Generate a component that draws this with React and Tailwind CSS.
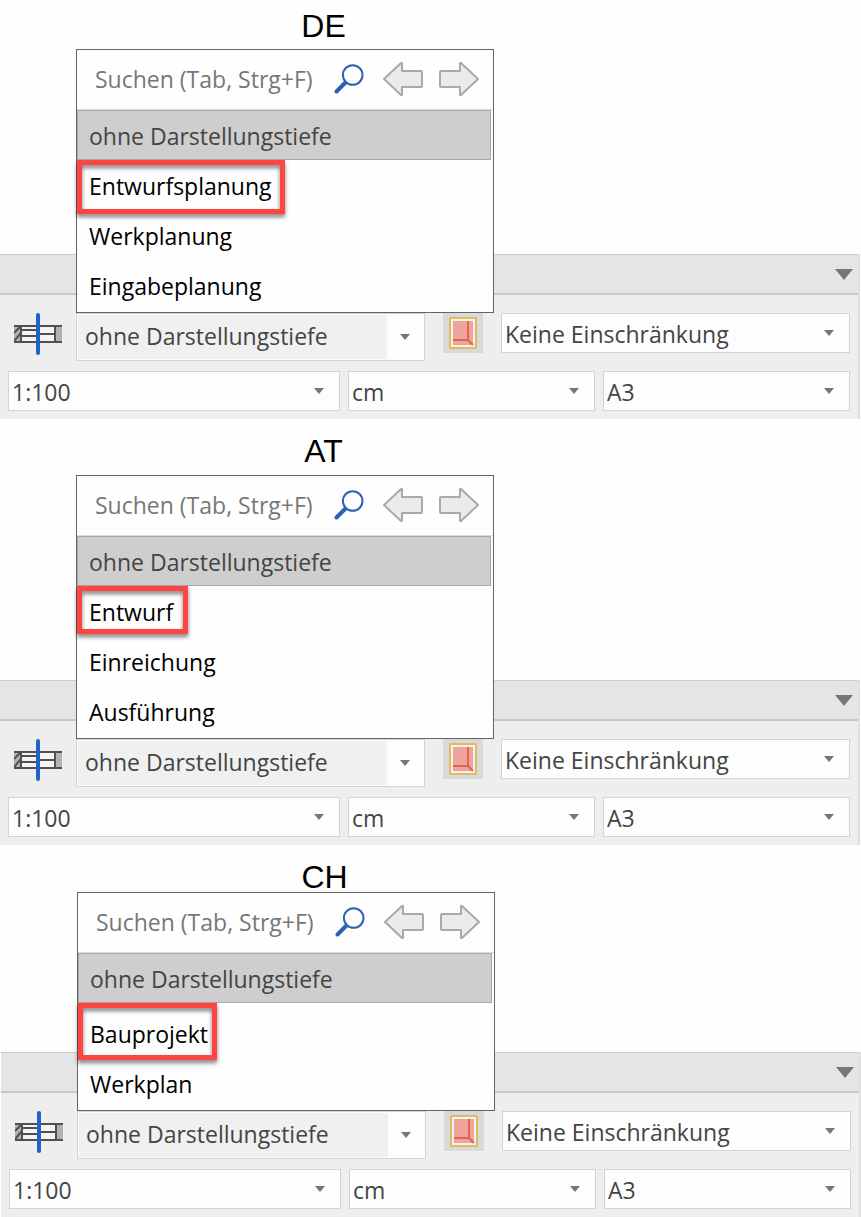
import React from "react";

const panels = [
    {
        id: "de",
        title: "DE",
        headClass: "pt-[10px] pb-[212px]",
        shiftClass: "mr-px",
        options: ["Entwurfsplanung", "Werkplanung", "Eingabeplanung"],
        firstRowClass: "h-[50px]",
        markClass: "w-[208px] h-[54px]",
    },
    {
        id: "at",
        title: "AT",
        headClass: "pt-[16px] pb-[213px]",
        shiftClass: "mr-px",
        options: ["Entwurf", "Einreichung", "Ausführung"],
        firstRowClass: "h-[50px]",
        markClass: "w-[111px] h-[48px]",
    },
    {
        id: "ch",
        title: "CH",
        headClass: "pt-[16px] pb-[159px]",
        shiftClass: "ml-px",
        options: ["Bauprojekt", "Werkplan"],
        firstRowClass: "h-[55px] pt-[5px]",
        markClass: "w-[139px] h-[57px]",
    },
];

function Caret({ className }) {
    return (
        <svg className={className} viewBox="0 0 10 6" aria-hidden="true">
            <path d="M0 0H10L5 6Z" fill="#777777" />
        </svg>
    );
}

function SearchIcon() {
    return (
        <svg className="w-[30px] h-[30px]" viewBox="0 0 30 30" aria-hidden="true">
            <path d="M11.5 18.5L2.5 27.5" stroke="#2b62b4" strokeWidth="4" strokeLinecap="round" />
            <circle cx="18.7" cy="11" r="9.8" fill="#fdfdfd" stroke="#2b62b4" strokeWidth="2" />
        </svg>
    );
}

function PrevIcon() {
    return (
        <svg className="w-[40px] h-[34px]" viewBox="0 0 40 34" aria-hidden="true">
            <path
                d="M1 17L18 1H19V9H38Q39 9 39 10V24Q39 25 38 25H19V33H18Z"
                fill="#ebebeb"
                stroke="#a9a9a9"
                strokeWidth="2"
                strokeLinejoin="round"
            />
        </svg>
    );
}

function NextIcon() {
    return (
        <svg className="w-[40px] h-[34px]" viewBox="0 0 40 34" aria-hidden="true">
            <path
                d="M39 17L22 1H21V9H2Q1 9 1 10V24Q1 25 2 25H21V33H22Z"
                fill="#ebebeb"
                stroke="#a9a9a9"
                strokeWidth="2"
                strokeLinejoin="round"
            />
        </svg>
    );
}

// Wandschnitt mit Fenster und Schnittlinie
function WindowSectionIcon() {
    return (
        <svg className="w-[48px] h-[42px] shrink-0" viewBox="0 0 48 42" aria-hidden="true">
            <rect x="0" y="13" width="7" height="16" fill="#b2b2b2" />
            <rect x="41" y="13" width="7" height="16" fill="#b2b2b2" />
            <rect x="8" y="14" width="32" height="14" fill="#f4f4f4" />
            <g stroke="#505050" strokeWidth="2" fill="none">
                <path d="M0 13H48M0 29H48M7 12V30M41 12V30" />
                <path d="M7 17H24M7 23H24M24 21H41" />
                <path d="M0 20L6 14M0 28L7 20" />
            </g>
            <rect x="22" y="0" width="4" height="42" rx="2" fill="#2062c8" />
        </svg>
    );
}

function FrameIcon() {
    return (
        <svg className="w-[28px] h-[32px]" viewBox="0 0 28 32" aria-hidden="true">
            <rect x="1" y="1" width="26" height="30" rx="0.5" fill="#f4f2f0" stroke="#e0bd58" strokeWidth="2" />
            <rect x="4" y="4" width="20" height="24" fill="#eea39b" />
            <path d="M19 4V23M4 23H19L24 28" fill="none" stroke="#e06555" strokeWidth="2" />
        </svg>
    );
}

function SelectBox({ id, label, value, className }) {
    return (
        <div className={`relative ${className}`}>
            <select
                id={id}
                aria-label={label}
                defaultValue={value}
                className="block w-full h-10 appearance-none rounded-none border border-[#d3d3d3] bg-[#fdfdfd] pl-[3px] pr-10 pt-px leading-9 text-[#444444]"
            >
                <option>{value}</option>
            </select>
            <Caret className="absolute right-4 top-[17px] w-[10px] h-[6px] pointer-events-none" />
        </div>
    );
}

function DepthMenu({ panel }) {
    return (
        <div className="absolute bottom-full left-0 z-10 w-[418px] border border-[#646464] bg-[#fefefe] pb-[2px]">
            <div className="flex items-center h-[60px] border-b border-[#dddddd] pl-[18px] pr-[14px] pb-[2px]">
                <input
                    type="text"
                    aria-label="Suchen"
                    placeholder="Suchen (Tab, Strg+F)"
                    className="flex-1 min-w-0 bg-transparent outline-none placeholder:text-[#777777]"
                />
                <button type="button" aria-label="Suche starten" className="mr-[19px]"><SearchIcon /></button>
                <button type="button" aria-label="Zurück" className="mr-4"><PrevIcon /></button>
                <button type="button" aria-label="Weiter"><NextIcon /></button>
            </div>
            <ul>
                <li className="mr-[2px]">
                    <button
                        type="button"
                        className="block w-full h-[50px] border border-[#a9a9a9] bg-[#cecece] pl-[11px] pt-[2px] text-left text-[#444444]"
                    >
                        ohne Darstellungstiefe
                    </button>
                </li>
                {panel.options.map((option, index) => (
                    <li key={option} className="relative">
                        <button
                            type="button"
                            className={`block w-full pl-3 text-left text-black ${index === 0 ? panel.firstRowClass : "h-[50px]"}`}
                        >
                            <span className="block pt-[2px]">{option}</span>
                        </button>
                        {index === 0 && (
                            <span
                                className={`absolute left-0 top-0 border-[5px] border-[#ff4444] pointer-events-none drop-shadow-[0_3px_2px_rgba(0,0,0,0.5)] ${panel.markClass}`}
                            />
                        )}
                    </li>
                ))}
            </ul>
        </div>
    );
}

function Panel({ panel }) {
    return (
        <section className={panel.shiftClass}>
            <div className={panel.headClass}>
                <h2 className="w-3/4 pl-[2px] text-center font-['Liberation_Sans',sans-serif] text-[32px] leading-8 text-black">
                    {panel.title}
                </h2>
            </div>

            <div className="border-r-2 border-[#e0e0e0] bg-[#eeeeee]">
                <div className="flex items-center justify-end h-[41px] border-t border-b-2 border-t-[#cccccc] border-b-[#c8c8c8] bg-[#e5e5e5] pr-[5px]">
                    <button type="button" aria-label="Leiste einklappen">
                        <Caret className="w-[18px] h-[11px]" />
                    </button>
                </div>

                <div className="px-2 pt-[18px] pb-2">
                    <div className="flex items-start">
                        <div className="w-[68px] shrink-0 pl-[6px]">
                            <WindowSectionIcon />
                        </div>
                        <div className="relative flex-1">
                            <DepthMenu panel={panel} />
                            <button
                                type="button"
                                aria-haspopup="true"
                                aria-expanded="true"
                                className="flex items-center w-full h-12 border border-[#d3d3d3] bg-[#fdfdfd] p-px text-left text-[#444444]"
                            >
                                <span className="flex-1 h-full bg-[#f0f0f0] pl-[7px] leading-[42px]">ohne Darstellungstiefe</span>
                                <span className="flex justify-center w-9">
                                    <Caret className="w-[10px] h-[6px]" />
                                </span>
                            </button>
                        </div>
                        <button
                            type="button"
                            aria-label="Rahmen"
                            className="flex items-center justify-center w-10 h-10 mx-[18px] bg-[#d9d9d9]"
                        >
                            <FrameIcon />
                        </button>
                        <SelectBox id={`${panel.id}-limit`} label="Einschränkung" value="Keine Einschränkung" className="flex-1" />
                    </div>

                    <div className="grid grid-cols-[332fr_247fr_247fr] gap-2 mt-[10px]">
                        <SelectBox id={`${panel.id}-scale`} label="Maßstab" value="1:100" className="min-w-0" />
                        <SelectBox id={`${panel.id}-unit`} label="Einheit" value="cm" className="min-w-0" />
                        <SelectBox id={`${panel.id}-paper`} label="Papierformat" value="A3" className="min-w-0" />
                    </div>
                </div>
            </div>
        </section>
    );
}

export default function App() {
    return (
        <main className="min-h-screen bg-[#fefefe] font-['Open_Sans',sans-serif] text-[23px] leading-8">
            {panels.map((panel) => (
                <Panel key={panel.id} panel={panel} />
            ))}
        </main>
    );
}
